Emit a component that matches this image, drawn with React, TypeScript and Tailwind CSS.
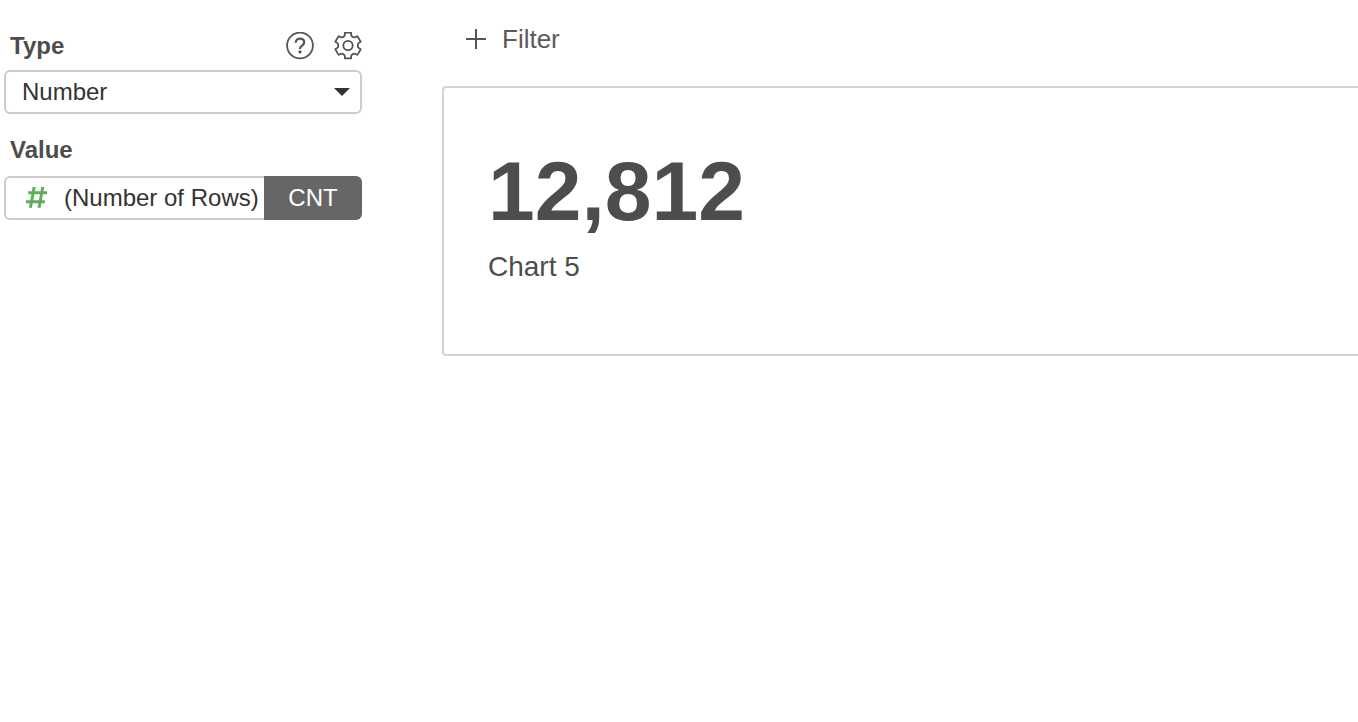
import { useState } from "react";

const chartTypes = ["Number", "Bar", "Line", "Pivot Table"];

function HelpIcon() {
  return (
    <svg width="28" height="28" viewBox="0 0 28 28" fill="none" stroke="#555555" aria-hidden="true">
      <circle cx="14" cy="13.5" r="12.9" strokeWidth="1.8" />
      <path d="M9.7 10.8C9.7 8.2 11.4 6.6 14 6.6c2.5 0 4.2 1.4 4.2 3.6 0 1.6-.8 2.5-2.2 3.4-1.4.9-1.9 1.5-1.9 2.7v.6" strokeWidth="2.2" />
      <circle cx="14" cy="19.9" r="1.6" fill="#555555" stroke="none" />
    </svg>
  );
}

function GearIcon() {
  return (
    <svg width="28" height="28" viewBox="0 0.5 28 28" fill="none" stroke="#555555" strokeWidth="1.8" strokeLinejoin="round" aria-hidden="true">
      <path d="M10.9 1.2h6.2V3q0 1.5 1.3 2.1l.9.5q1.2.7 2.4-.1l1.7-.9 3.3 5.6-1.6 1q-1.3.8-1.3 2v1.6q0 1.2 1.3 2l1.6 1-3.3 5.6-1.7-.9q-1.2-.8-2.4-.1l-.9.5q-1.3.6-1.3 2.1v1.8h-6.2V25q0-1.5-1.3-2.1l-.9-.5q-1.2-.7-2.4.1l-1.7.9-3.3-5.6 1.6-1q1.3-.8 1.3-2v-1.6q0-1.2-1.3-2l-1.6-1 3.3-5.6 1.7.9q1.2.8 2.4.1l.9-.5Q10.9 4.5 10.9 3z" />
      <circle cx="14" cy="14" r="4.7" />
    </svg>
  );
}

function HashIcon() {
  return (
    <svg width="22" height="22" viewBox="0 0.5 22 22" fill="none" stroke="#5fad58" strokeWidth="3" className="shrink-0" aria-hidden="true">
      <path d="M2.2 6.3h18.8M0 15.200h18.800M8.200.5 4.400 21.200M16.800.5l-3.800 20.700" />
    </svg>
  );
}

function PlusIcon() {
  return (
    <svg width="20" height="20" viewBox="0 0 20 20" fill="none" stroke="#555555" strokeWidth="2" aria-hidden="true">
      <path d="M10 0v20M0 10h20" />
    </svg>
  );
}

function Sidebar() {
  const [type, setType] = useState("Number");

  return (
    <aside className="w-[358px] shrink-0 text-2xl">
      <div className="flex items-center justify-between h-8 pl-1.5 mb-2">
        <label htmlFor="chart-type" className="font-bold text-[#4d4d4d]">Type</label>
        <div className="flex gap-5">
          <button type="button" aria-label="Help"><HelpIcon /></button>
          <button type="button" aria-label="Settings"><GearIcon /></button>
        </div>
      </div>
      <div className="relative">
        <select
          id="chart-type"
          value={type}
          onChange={(e) => setType(e.target.value)}
          className="w-full h-11 pl-4 pr-10 border-2 border-[#cccccc] rounded-md bg-white text-[#333333] appearance-none"
        >
          {chartTypes.map((t) => (
            <option key={t}>{t}</option>
          ))}
        </select>
        <svg width="16" height="8" viewBox="0 0 16 8" fill="#333333" className="absolute right-3 top-[18px] pointer-events-none" aria-hidden="true">
          <path d="M0 0h16L8 8z" />
        </svg>
      </div>

      <h2 className="pl-1.5 mt-5 mb-2.5 font-bold text-[#4d4d4d]">Value</h2>
      <div className="flex h-11">
        <button type="button" className="flex flex-1 items-center gap-4 pl-5 border-2 border-r-0 border-[#cccccc] rounded-l-md bg-white text-[#333333] whitespace-nowrap">
          <HashIcon />
          (Number of Rows)
        </button>
        <button type="button" className="w-[98px] shrink-0 rounded-r-md bg-[#666666] text-white">CNT</button>
      </div>
    </aside>
  );
}

function App() {
  return (
    <div className="flex gap-20 min-h-screen pl-1 bg-white font-['Liberation_Sans',Arial,sans-serif]">
      <div className="pt-[30px]">
        <Sidebar />
      </div>
      <main className="flex-1 min-w-0 pt-[19px]">
        <button type="button" className="flex items-center gap-4 h-10 pl-6 mb-[27px] text-[26px] text-[#5a5a5a]">
          <PlusIcon />
          Filter
        </button>
        <section className="h-[270px] pt-[61px] pl-11 border-2 border-r-0 border-[#d4d4d4] rounded-l text-[#4d4d4d]">
          <div className="text-[84px] leading-[84px] font-bold">12,812</div>
          <div className="mt-4 text-[28px] leading-9">Chart 5</div>
        </section>
      </main>
    </div>
  );
}

export default App;
